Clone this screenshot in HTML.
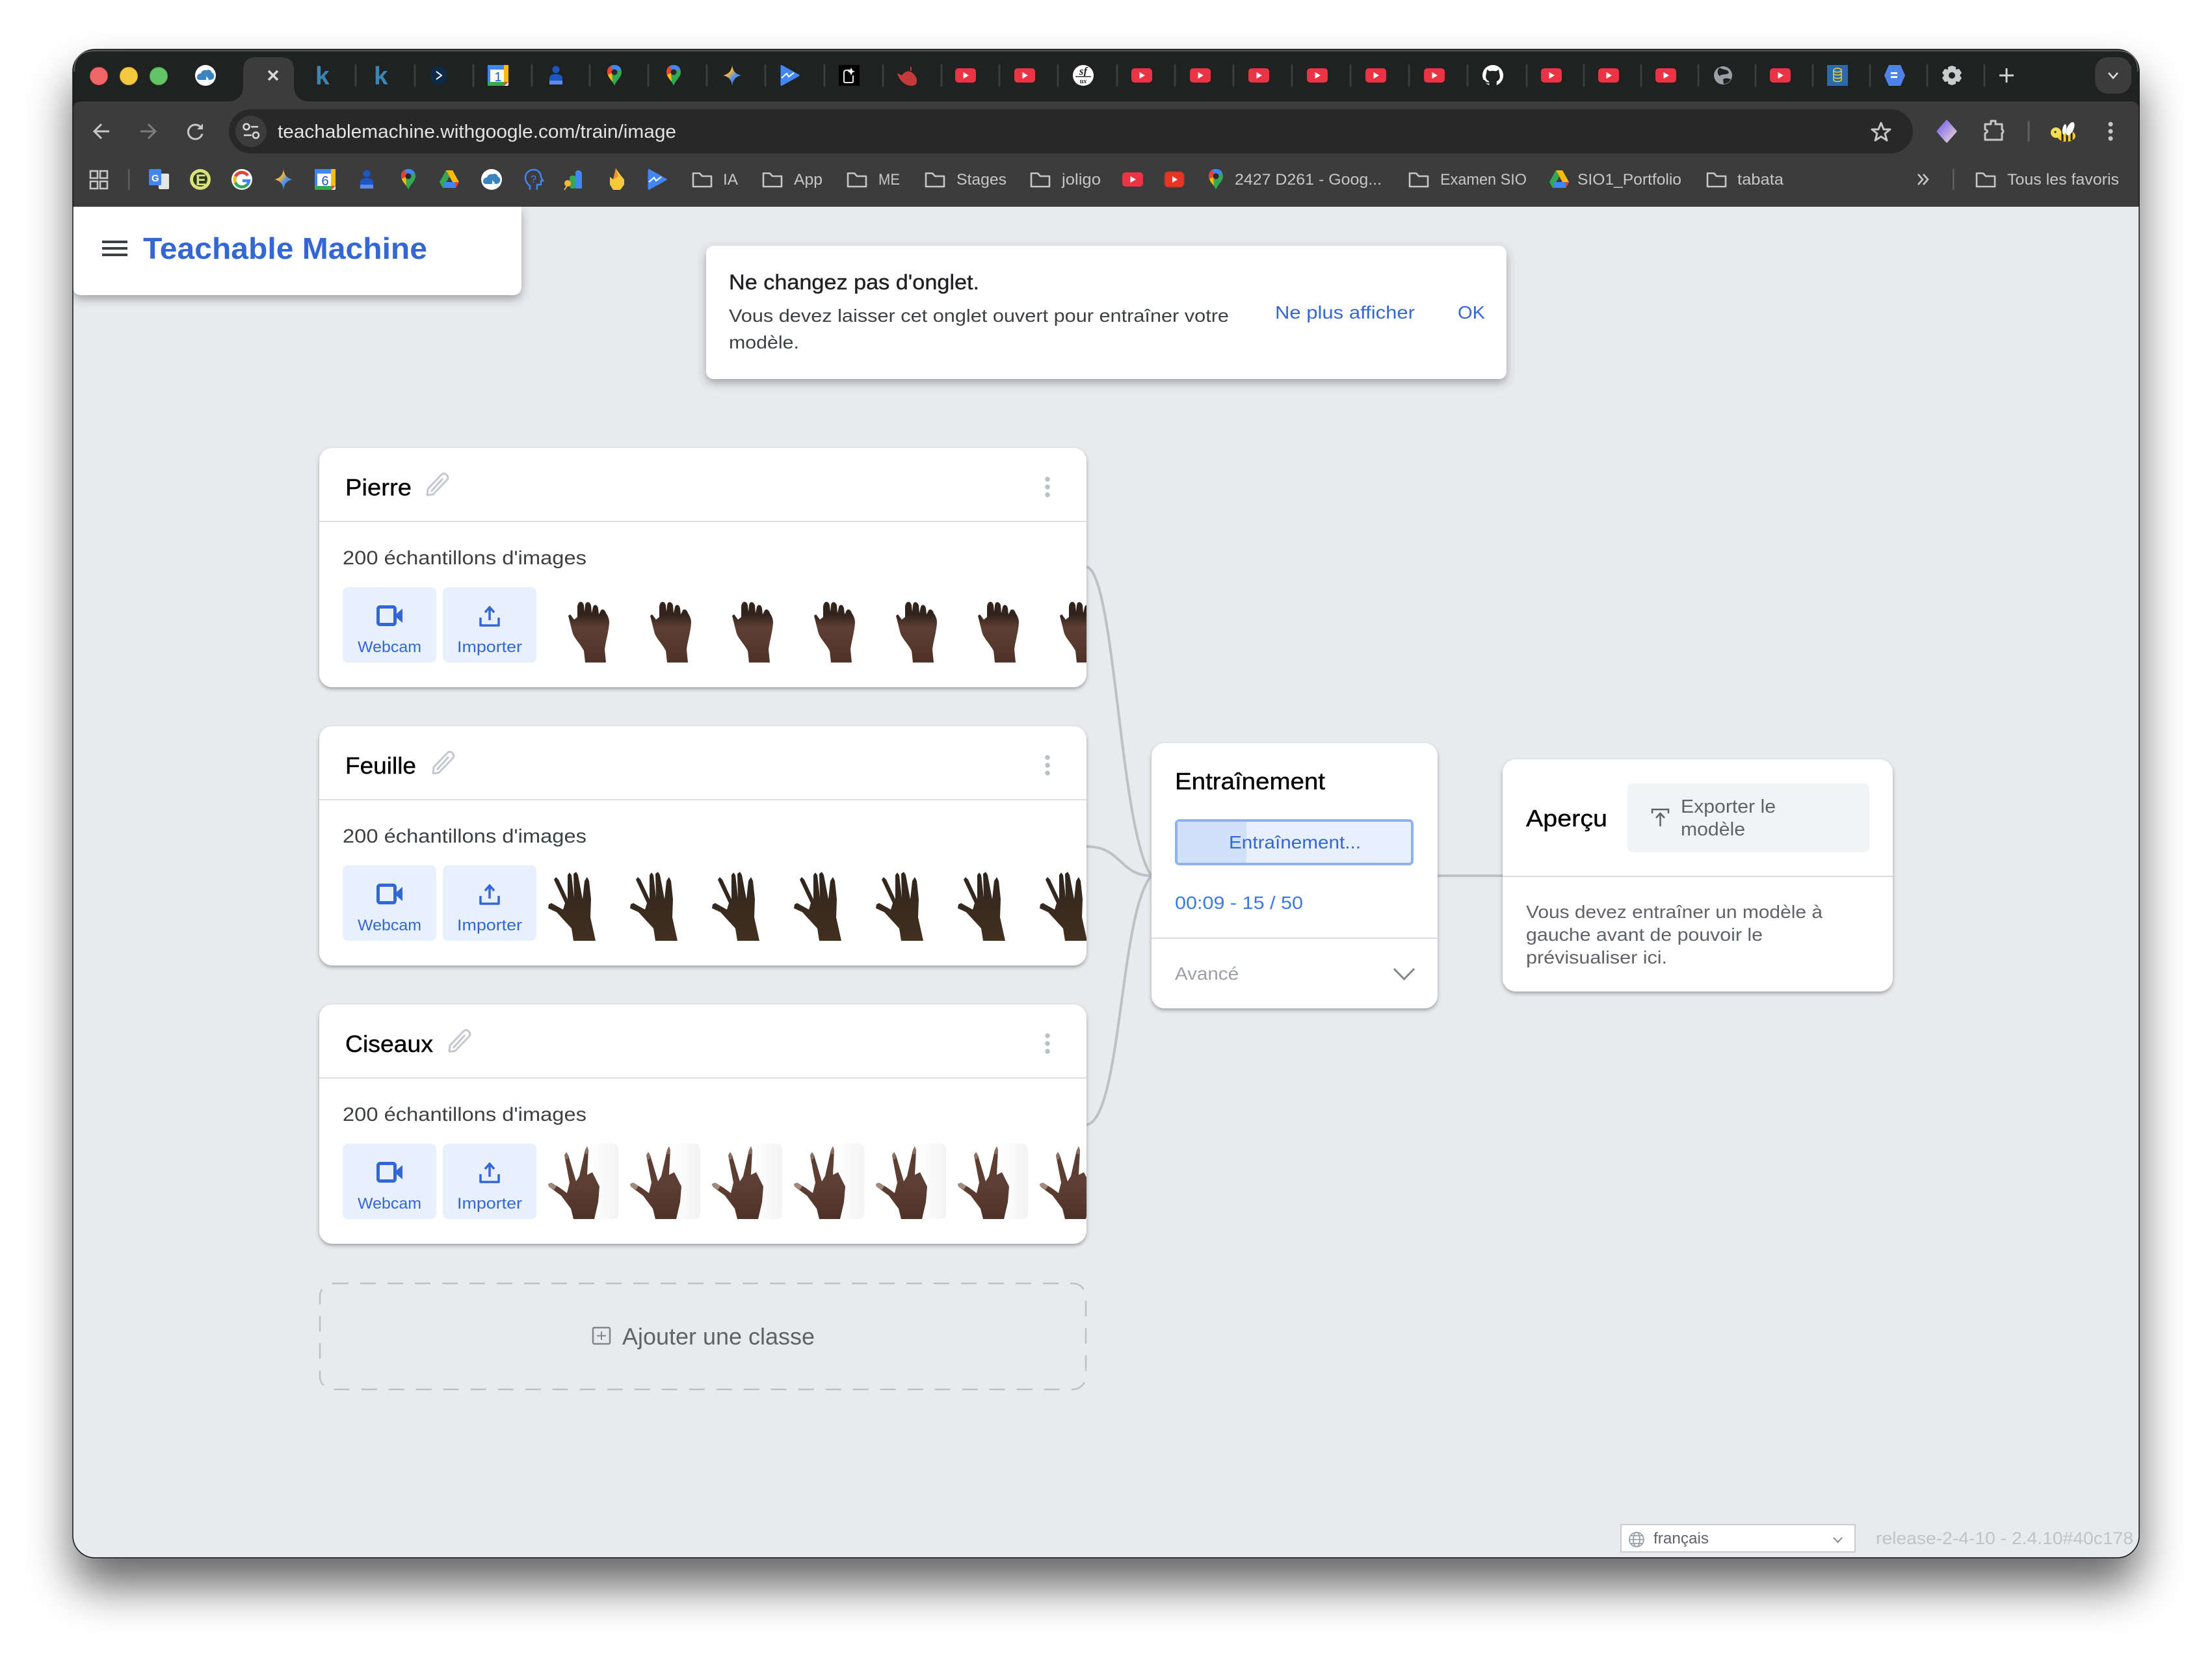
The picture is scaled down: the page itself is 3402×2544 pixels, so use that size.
<!DOCTYPE html>
<html lang="fr"><head><meta charset="utf-8"><title>Teachable Machine</title>
<style>
html,body{margin:0;padding:0;background:#fff}
svg{display:block}
text{font-family:"Liberation Sans",sans-serif;white-space:pre}
</style></head>
<body>
<svg xmlns="http://www.w3.org/2000/svg" width="3402" height="2544" viewBox="0 0 3402 2544">
<defs>
<filter id="winsh" x="-10%" y="-10%" width="120%" height="120%"><feGaussianBlur stdDeviation="35"/></filter>
<filter id="cs" x="-5%" y="-10%" width="110%" height="125%"><feDropShadow dx="0" dy="3" stdDeviation="3" flood-color="#3c4043" flood-opacity=".42"/></filter>
<filter id="cb" x="-8%" y="-15%" width="116%" height="140%"><feDropShadow dx="0" dy="6" stdDeviation="7" flood-color="#3c4043" flood-opacity=".42"/></filter>
<clipPath id="win"><rect x="112" y="76" width="3178" height="2320" rx="34"/></clipPath>
<clipPath id="cardclip"><rect x="491" y="680" width="1180" height="1300"/></clipPath>
<linearGradient id="gem" x1="0" y1="0" x2="1" y2="1"><stop offset="0" stop-color="#e8574a"/><stop offset=".35" stop-color="#f6b83c"/><stop offset=".6" stop-color="#4d8cf5"/><stop offset="1" stop-color="#35a853"/></linearGradient>
<linearGradient id="skin" x1="0" y1="0" x2="0" y2="1"><stop offset="0" stop-color="#33231d"/><stop offset=".22" stop-color="#33231d"/><stop offset=".42" stop-color="#5e3f33"/><stop offset="1" stop-color="#4f3227"/></linearGradient>
<linearGradient id="skin3" x1="0" y1="0" x2="0" y2="1"><stop offset="0" stop-color="#5a3c32"/><stop offset=".5" stop-color="#5e3f33"/><stop offset="1" stop-color="#4f3227"/></linearGradient>
<linearGradient id="dark" x1="0" y1="0" x2="0" y2="1"><stop offset="0" stop-color="#2f241d"/><stop offset="1" stop-color="#42301f"/></linearGradient>
<linearGradient id="tile3" x1="0" y1="0" x2="1" y2="0"><stop offset=".6" stop-color="#fff"/><stop offset="1" stop-color="#f3f3f3"/></linearGradient>
<linearGradient id="gemx" x1="0" y1="0" x2="1" y2="1"><stop offset="0" stop-color="#6f5cf5"/><stop offset="1" stop-color="#f0d8d0"/></linearGradient>

<symbol id="yt" viewBox="0 0 32 32"><rect x="0" y="5" width="32" height="22" rx="5" fill="#ea3344"/><path d="M12.500 11 L21 16 L12.500 21Z" fill="#fff"/></symbol>
<symbol id="maps" viewBox="0 0 32 32"><path d="M16 0C8 0 5 6 5 11C5 19 13 23 16 32C19 23 27 19 27 11C27 6 24 0 16 0Z" fill="#34a853"/><path d="M6 7C8 2 12 0 16 0C21 0 24 2 26 6L16 11Z" fill="#4285f4"/><path d="M5 11C5 6 7 3 10 2L16 11L8 19C6 16 5 14 5 11Z" fill="#ea4335"/><path d="M6 15L12 12L13 26C10 22 7 19 6 15Z" fill="#fbbc04"/><circle cx="16" cy="11" r="4.500" fill="#2a2a2a"/></symbol>
<symbol id="gemini" viewBox="0 0 32 32"><path d="M16 0C17 9 21 14 30 16C21 18 17 23 16 32C15 23 11 18 2 16C11 14 15 9 16 0Z" fill="url(#gem)"/></symbol>
<symbol id="person" viewBox="0 0 32 32"><circle cx="16" cy="7" r="5.500" fill="#1a56c4"/><path d="M6 30V21C6 16 10 14 16 14C22 14 26 16 26 21V30Z" fill="#1a56c4"/><path d="M6 30V24H26V30Z" fill="#5b8cec"/></symbol>
<symbol id="cal" viewBox="0 0 32 32"><rect width="32" height="32" rx="2" fill="#fff"/><rect width="32" height="7" fill="#4285f4"/><rect width="4" height="32" fill="#4285f4"/><rect x="25" width="7" height="26" fill="#fbbc04"/><rect y="26" width="26" height="6" fill="#34a853"/><path d="M26 26H32L26 32Z" fill="#ea4335"/></symbol>
<symbol id="cloud" viewBox="0 0 32 32"><circle cx="16" cy="16" r="16" fill="#fff"/><path d="M3 19C3 15 6 13 9 13C10 9 14 7 18 8C21 6 25 8 26 12C29 13 30 16 29 19C28 22 25 23 22 23H8C5 23 3 22 3 19Z" fill="#3c83bd"/><path d="M17 17L17 25L20 22L23 24Z" fill="#fff"/></symbol>
<symbol id="folder" viewBox="0 0 32 32"><path d="M2 6.500H12L16 11H30V27H2Z" fill="none" stroke="#c4c7c5" stroke-width="2.600" stroke-linejoin="round"/></symbol>
<symbol id="drive" viewBox="0 0 32 32"><path d="M11 2H21L31 20H21Z" fill="#fbbc04"/><path d="M11 2L1 20L6 29L16 12Z" fill="#34a853"/><path d="M9 20H31L26 29H6Z" fill="#4285f4"/><path d="M26 29L31 20H25Z" fill="#ea4335"/></symbol>
<symbol id="blueplay" viewBox="0 0 32 32"><path d="M3 1.500L29 16L3 30.500Z" fill="#4285f4" stroke="#4285f4" stroke-width="3" stroke-linejoin="round"/><path d="M3 20L11 13L14 18L22 12" fill="none" stroke="#fff" stroke-width="2"/></symbol>
<symbol id="webcam" viewBox="0 0 40 32"><rect x="2.500" y="2.500" width="26" height="27" rx="3" fill="none" stroke="#3367d6" stroke-width="5"/><path d="M31 13L40 5V27L31 19Z" fill="#3367d6"/></symbol>
<symbol id="upload" viewBox="0 0 32 32"><path d="M16 22V4M9 10L16 2L23 10" fill="none" stroke="#3367d6" stroke-width="3.500"/><path d="M2 18V30H30V18" fill="none" stroke="#3367d6" stroke-width="3.500" stroke-linejoin="round"/></symbol>
<symbol id="pencil" viewBox="0 0 36 36"><path d="M2 34.500L3 25L24 3Q27 0 31 2.500L33 5Q35 8 32.500 11L11 33.500Z M8 29L26 9" fill="none" stroke="#c4c7cc" stroke-width="3" stroke-linejoin="round"/></symbol>

<symbol id="rock" viewBox="0 0 115 116"><path d="M64 116L62 98C55 85 46 78 44 68L38 44L41 42L47 50L52 46L52 30C53 21 60 20 62 28L63 38L64 28C65 21 71 22 73 28L74 40L76 31C77 26 83 26 84 33L85 42L88 36C91 32 95 36 96 40C100 46 101 50 101 55C100 70 95 85 94 96L96 116Z" fill="url(#skin)"/></symbol>
<symbol id="paper" viewBox="0 0 115 116"><path d="M46 116L43 97L20 72L7 66L8 60L12 58L30 68L33 58L16 22L19 18L23 22L37 52L37 15L40 11L43 15L47 50L46 13L50 10L53 15L60 52L63 24L67 18L70 24L73 52L72 80L80 116Z" fill="url(#dark)"/></symbol>
<symbol id="sciss" viewBox="0 0 115 116"><rect width="115" height="116" rx="8" fill="url(#tile3)"/><path d="M46 116L42 100L27 80L8 66L7 62L12 60L25 68L36 76L40 60L32 18L35 13L38 18L50 58L55 50L64 10L67 4L69 10L67 48L75 44L80 54L86 66L84 90L78 116Z" fill="url(#skin3)"/><path d="M7 62L12 60L20 65L16 71L8 66Z" fill="#a08a7e"/><path d="M32 18L35 13L38 18L37 24L33 24ZM64 10L67 4L69 10L68 16L64 16Z" fill="#8a6f63"/></symbol>
<g id="tiles1">
<use href="#rock" x="836" y="903" width="115" height="116"/><use href="#rock" x="962" y="903" width="115" height="116"/><use href="#rock" x="1088" y="903" width="115" height="116"/><use href="#rock" x="1214" y="903" width="115" height="116"/><use href="#rock" x="1340" y="903" width="115" height="116"/><use href="#rock" x="1466" y="903" width="115" height="116"/><use href="#rock" x="1592" y="903" width="115" height="116"/>
</g>
<g id="btns">
<rect x="527" y="903" width="144" height="116" rx="8" fill="#e8effd"/><rect x="681" y="903" width="144" height="116" rx="8" fill="#e8effd"/>
<use href="#webcam" x="579" y="931" width="40" height="32"/><use href="#upload" x="737" y="932" width="32" height="32"/>
</g>
<g id="cardbase">
<rect x="491" y="689" width="1180" height="368" rx="20" fill="#fff" filter="url(#cs)"/>
<rect x="491" y="801" width="1180" height="2" fill="#dedfe1"/>
<circle cx="1611" cy="737" r="3.800" fill="#bdc1c6"/><circle cx="1611" cy="749" r="3.800" fill="#bdc1c6"/><circle cx="1611" cy="761" r="3.800" fill="#bdc1c6"/>
</g>
</defs>

<rect width="3402" height="2544" fill="#fff"/>
<rect x="112" y="120" width="3178" height="2320" rx="34" fill="#000" opacity=".6" filter="url(#winsh)"/>

<g clip-path="url(#win)">
<rect x="112" y="76" width="3178" height="2320" fill="#e8eaed"/>
<rect x="112" y="76" width="3178" height="242" fill="#202221"/>
<path d="M112 170Q112 156 126 156H3276Q3290 156 3290 170V318H112Z" fill="#3c3c3c"/>
<path d="M350 156C366 156 374 146 374 132V108Q374 88 394 88H432Q452 88 452 108V132C452 146 460 156 476 156Z" fill="#3c3c3c"/>

<!-- traffic lights -->
<circle cx="152" cy="117" r="13.500" fill="#f0676a" stroke="#d8494c" stroke-width="1"/>
<circle cx="198" cy="117" r="13.500" fill="#f5c83f" stroke="#d9a92c" stroke-width="1"/>
<circle cx="244" cy="117" r="13.500" fill="#62c466" stroke="#47a94d" stroke-width="1"/>
<use href="#cloud" x="300" y="100" width="32" height="32"/>
<path d="M413 109L427 123M427 109L413 123" stroke="#d8d8d8" stroke-width="3.500" fill="none"/>

<!-- tab separators -->
<path d="M547 100v32M638 100v32M728 100v32M818 100v32M907 100v32M997 100v32M1087 100v32M1177 100v32M1268 100v32M1358 100v32M1448 100v32M1537 100v32M1627 100v32M1718 100v32M1807 100v32M1897 100v32M1987 100v32M2077 100v32M2167 100v32M2257 100v32M2348 100v32M2436 100v32M2524 100v32M2612 100v32M2700 100v32M2788 100v32M2876 100v32M2964 100v32M3052 100v32" stroke="#3c3f3e" stroke-width="3" stroke-linecap="round"/>

<!-- tab icons -->
<text x="485" y="130" font-size="39" font-weight="bold" fill="#3a86b4">k</text>
<text x="575" y="130" font-size="39" font-weight="bold" fill="#3a86b4">k</text>
<path d="M675 100L687 107V125L675 132L663 125V107Z" fill="#0e2a47"/><path d="M671 110L679 116L671 122" fill="none" stroke="#fff" stroke-width="2"/>
<use href="#cal" x="750" y="100" width="32" height="32"/><text x="766" y="125" font-size="20" fill="#1a56c4" text-anchor="middle">1</text>
<use href="#person" x="839" y="100" width="32" height="32"/>
<use href="#maps" x="929" y="100" width="32" height="32"/>
<use href="#maps" x="1020" y="100" width="32" height="32"/>
<use href="#gemini" x="1110" y="100" width="32" height="32"/>
<use href="#blueplay" x="1199" y="100" width="32" height="32"/>
<rect x="1290" y="100" width="32" height="32" fill="#000"/><path d="M1307 108H1302Q1298 108 1298 112V125Q1298 127 1300 127H1310Q1312 127 1312 125V116" fill="none" stroke="#e8e8e8" stroke-width="2"/><path d="M1309 104L1311 108.500L1315 110L1311 111.500L1309 116L1307 111.500L1303 110L1307 108.500Z" fill="#fff"/>
<path d="M1380 113C1383 112 1384 117 1388 115C1392 109 1399 108 1403 112C1411 118 1412 127 1407 131C1397 135 1384 127 1380 113Z" fill="#c43a3a"/><path d="M1401 103V109" stroke="#c43a3a" stroke-width="2"/>
<use href="#yt" x="1469" y="100" width="32" height="32"/><use href="#yt" x="1560" y="100" width="32" height="32"/>
<circle cx="1666" cy="116" r="16" fill="#fff"/><text x="1666" y="115" font-size="17" font-style="italic" font-weight="bold" fill="#222" text-anchor="middle" style="font-family:'Liberation Serif',serif">sf</text><rect x="1654" y="117" width="24" height="1.500" fill="#333"/><text x="1666" y="128" font-size="10" font-style="italic" font-weight="bold" fill="#222" text-anchor="middle" style="font-family:'Liberation Serif',serif">ux</text>
<use href="#yt" x="1740" y="100" width="32" height="32"/><use href="#yt" x="1830" y="100" width="32" height="32"/><use href="#yt" x="1920" y="100" width="32" height="32"/><use href="#yt" x="2010" y="100" width="32" height="32"/><use href="#yt" x="2100" y="100" width="32" height="32"/><use href="#yt" x="2190" y="100" width="32" height="32"/>
<circle cx="2296" cy="116" r="16" fill="#fff"/><path d="M2287 107L2291 109.500Q2296 108.500 2301 109.500L2305 107L2306 113Q2309 122 2302 125L2301.500 132H2290.500L2290 125Q2283 122 2286 113Z" fill="#202221"/><path d="M2290 127.500Q2285 128 2282 123" stroke="#202221" stroke-width="2" fill="none"/>
<use href="#yt" x="2370" y="100" width="32" height="32"/><use href="#yt" x="2458" y="100" width="32" height="32"/><use href="#yt" x="2546" y="100" width="32" height="32"/>
<circle cx="2650" cy="116" r="14" fill="#9aa0a6"/><path d="M2645 104C2650 108 2658 106 2659 112C2655 116 2648 113 2645 117C2641 114 2640 108 2645 104ZM2650 122C2654 119 2660 121 2662 122C2659 127 2655 129 2651 129Z" fill="#202221"/>
<use href="#yt" x="2722" y="100" width="32" height="32"/>
<rect x="2810" y="100" width="32" height="32" fill="#2c6aa8"/><ellipse cx="2826" cy="108" rx="6" ry="3" fill="none" stroke="#e7c93a" stroke-width="1.600"/><path d="M2820 108V124M2832 108V124M2820 114Q2826 117 2832 114M2820 119Q2826 122 2832 119M2820 124Q2826 127 2832 124" stroke="#e7c93a" stroke-width="1.600" fill="none"/>
<path d="M2905 100H2923L2930 116L2923 132H2905L2898 116Z" fill="#4f83ec"/><rect x="2908" y="111" width="10" height="3" fill="#fff"/><rect x="2908" y="117" width="10" height="3" fill="#fff"/>
<path d="M3002 101L3008 103V107L3013 106L3017 112L3014 116L3017 120L3013 126L3008 125V129L3002 131L2996 129V125L2991 126L2987 120L2990 116L2987 112L2991 106L2996 107V103Z" fill="#c9cbcd"/><circle cx="3002" cy="116" r="5" fill="#202221"/>
<path d="M3086 105V127M3075 116H3097" stroke="#cfd1d2" stroke-width="3"/>
<rect x="3222" y="88" width="56" height="56" rx="20" fill="#3c3c3c"/>
<path d="M3243 112L3250 120L3257 112" fill="none" stroke="#d8d8d8" stroke-width="2.600"/>

<!-- toolbar -->
<path d="M168 202H146M156 191L145 202L156 213" fill="none" stroke="#c7c7c7" stroke-width="3"/>
<path d="M216 202H238M228 191L239 202L228 213" fill="none" stroke="#7d7d7d" stroke-width="3"/>
<path d="M309 196A11 11 0 1 0 311 206" fill="none" stroke="#c7c7c7" stroke-width="3"/><path d="M312 190V199H303Z" fill="#c7c7c7"/>
<rect x="352" y="168" width="2590" height="68" rx="34" fill="#282828"/>
<circle cx="386" cy="202" r="24" fill="#3c3c3c"/>
<circle cx="379" cy="195" r="4.500" fill="none" stroke="#d8d8d8" stroke-width="2.600"/><path d="M386 195H397M375 208H387" stroke="#d8d8d8" stroke-width="2.600"/><circle cx="393.500" cy="208" r="4.500" fill="none" stroke="#d8d8d8" stroke-width="2.600"/>
<text x="427" y="212" font-size="29" fill="#e3e3e3" textLength="613" lengthAdjust="spacingAndGlyphs">teachablemachine.withgoogle.com/train/image</text>
<path d="M2893 189L2897 199H2907L2899 205.500L2902 216L2893 210L2884 216L2887 205.500L2879 199H2889Z" fill="none" stroke="#c7c7c7" stroke-width="3" stroke-linejoin="round"/>
<path d="M2994 186L3008 202L2994 218L2980 202Z" fill="url(#gemx)" stroke="url(#gemx)" stroke-width="3" stroke-linejoin="round"/>
<path d="M3053 191H3062V186H3069V191H3079V199Q3083 202 3079 205V215H3053V205Q3060 202 3053 199Z" fill="none" stroke="#c7c7c7" stroke-width="3" stroke-linejoin="round"/>
<rect x="3118.500" y="186" width="3" height="32" rx="1.500" fill="#5f5f5f"/>
<ellipse cx="3178" cy="209" rx="14" ry="9" fill="#f3cd2d"/><path d="M3172 201V217M3179 200V218M3186 202V216" stroke="#222" stroke-width="3"/>
<circle cx="3162" cy="204" r="8" fill="#f7dd55"/><circle cx="3161" cy="203" r="1.500" fill="#111"/>
<ellipse cx="3184" cy="198" rx="5" ry="11" fill="#fff" transform="rotate(25 3184 198)"/><ellipse cx="3175" cy="199" rx="3" ry="8" fill="#fff" transform="rotate(10 3175 199)"/>
<circle cx="3246" cy="191" r="3.500" fill="#c7c7c7"/><circle cx="3246" cy="202" r="3.500" fill="#c7c7c7"/><circle cx="3246" cy="213" r="3.500" fill="#c7c7c7"/>

<!-- bookmarks -->
<g fill="none" stroke="#c7c7c7" stroke-width="2.600"><rect x="139" y="263" width="11" height="11"/><rect x="154" y="263" width="11" height="11"/><rect x="139" y="279" width="11" height="11"/><rect x="154" y="279" width="11" height="11"/></g>
<rect x="197" y="260" width="2.500" height="32" fill="#5f5f5f"/>
<rect x="244" y="267" width="16" height="24" rx="2" fill="#e4e4e4"/><rect x="229" y="260" width="19" height="25" rx="2" fill="#4285f4"/><text x="233" y="279" font-size="15" fill="#fff" font-weight="bold">G</text>
<circle cx="308" cy="276" r="16" fill="#dbe27d"/><circle cx="308" cy="276" r="11" fill="#2c3a1c"/><text x="301" y="285" font-size="24" font-weight="bold" fill="#dbe27d">E</text>
<circle cx="372" cy="276" r="16" fill="#fff"/><path d="M381 270A11 11 0 1 0 383 278H373" fill="none" stroke="#4285f4" stroke-width="4.500"/><path d="M381 270A11 11 0 0 0 362 271" fill="none" stroke="#ea4335" stroke-width="4.500"/><path d="M362 271A11 11 0 0 0 362 281" fill="none" stroke="#fbbc04" stroke-width="4.500"/><path d="M362 281A11 11 0 0 0 380 284" fill="none" stroke="#34a853" stroke-width="4.500"/>
<use href="#gemini" x="420" y="260" width="32" height="32"/>
<use href="#cal" x="484" y="260" width="32" height="32"/><text x="500" y="285" font-size="20" fill="#1a56c4" text-anchor="middle">6</text>
<use href="#person" x="548" y="260" width="32" height="32"/>
<use href="#maps" x="612" y="260" width="32" height="32"/>
<use href="#drive" x="675" y="260" width="32" height="32"/>
<use href="#cloud" x="740" y="260" width="32" height="32"/>
<path d="M815 292V286C810 282 808 278 808 273C808 266 814 261 821 261C828 261 832 267 832 272L835 278H832V284H826V292" fill="none" stroke="#4285f4" stroke-width="2.500"/><text x="816" y="281" font-size="16" fill="#4285f4">?</text>
<path d="M889 262Q895 262 895 268V290H885V266Q885 262 889 262Z" fill="#4285f4"/><rect x="876" y="270" width="10" height="20" rx="4" fill="#34a853"/><circle cx="873" cy="282" r="5" fill="#f6b83c"/><path d="M872 286L868 292" stroke="#f6b83c" stroke-width="2"/>
<path d="M947 259L955 270L960 276V284L954 292H943L938 284V272L943 276Z" fill="#f7c83c"/><path d="M947 259L951 271L943 276Z" fill="#e8912d"/>
<use href="#blueplay" x="995" y="260" width="32" height="32"/>

<g font-size="24" fill="#c7c7c7">
<use href="#folder" x="1064" y="260" width="32" height="32"/><text x="1112" y="284" textLength="23" lengthAdjust="spacingAndGlyphs">IA</text>
<use href="#folder" x="1172" y="260" width="32" height="32"/><text x="1221" y="284" textLength="44" lengthAdjust="spacingAndGlyphs">App</text>
<use href="#folder" x="1302" y="260" width="32" height="32"/><text x="1351" y="284" textLength="33" lengthAdjust="spacingAndGlyphs">ME</text>
<use href="#folder" x="1422" y="260" width="32" height="32"/><text x="1471" y="284" textLength="77" lengthAdjust="spacingAndGlyphs">Stages</text>
<use href="#folder" x="1584" y="260" width="32" height="32"/><text x="1633" y="284" textLength="60" lengthAdjust="spacingAndGlyphs">joligo</text>
<use href="#yt" x="1726" y="260" width="32" height="32"/>
<rect x="1791" y="264" width="30" height="24" rx="6" fill="#ea3323" stroke="#8f3a30" stroke-width="1.500"/><path d="M1803 271L1811 276L1803 281Z" fill="#fff"/>
<use href="#maps" x="1854" y="260" width="32" height="32"/><text x="1899" y="284" textLength="226" lengthAdjust="spacingAndGlyphs">2427 D261 - Goog...</text>
<use href="#folder" x="2166" y="260" width="32" height="32"/><text x="2215" y="284" textLength="133" lengthAdjust="spacingAndGlyphs">Examen SIO</text>
<use href="#drive" x="2382" y="260" width="32" height="32"/><text x="2426" y="284" textLength="160" lengthAdjust="spacingAndGlyphs">SIO1_Portfolio</text>
<use href="#folder" x="2624" y="260" width="32" height="32"/><text x="2672" y="284" textLength="71" lengthAdjust="spacingAndGlyphs">tabata</text>
<path d="M2950 268L2957 276L2950 284M2958 268L2965 276L2958 284" fill="none" stroke="#c7c7c7" stroke-width="2.600"/>
<rect x="3003" y="260" width="2.500" height="32" fill="#5f5f5f"/>
<use href="#folder" x="3038" y="260" width="32" height="32"/><text x="3087" y="284" textLength="172" lengthAdjust="spacingAndGlyphs">Tous les favoris</text>
</g>

<!-- connectors -->
<g fill="none" stroke="#bdc1c6" stroke-width="4">
<path d="M1671 872C1715 880 1722 1280 1771 1347"/>
<path d="M1671 1302C1725 1302 1722 1347 1771 1347"/>
<path d="M1671 1730C1725 1722 1722 1400 1771 1347"/>
<path d="M2211 1347H2311"/>
</g>

<!-- header card -->
<path d="M112 318H802V440Q802 454 788 454H126Q112 454 112 440Z" fill="#fff" filter="url(#cb)"/>
<rect x="157" y="370" width="39" height="4" fill="#3c4043"/><rect x="157" y="380" width="39" height="4" fill="#3c4043"/><rect x="157" y="390" width="39" height="4" fill="#3c4043"/>
<text x="220" y="398" font-size="46" font-weight="bold" fill="#3367d6" textLength="437" lengthAdjust="spacingAndGlyphs">Teachable Machine</text>

<!-- notification -->
<rect x="1086" y="378" width="1231" height="205" rx="12" fill="#fff" filter="url(#cb)"/>
<text x="1121" y="445" font-size="32" fill="#202124" stroke="#202124" stroke-width=".4" textLength="385" lengthAdjust="spacingAndGlyphs">Ne changez pas d'onglet.</text>
<text x="1121" y="495" font-size="28" fill="#3c4043" textLength="769" lengthAdjust="spacingAndGlyphs">Vous devez laisser cet onglet ouvert pour entraîner votre</text>
<text x="1121" y="536" font-size="28" fill="#3c4043" textLength="108" lengthAdjust="spacingAndGlyphs">modèle.</text>
<text x="1961" y="490" font-size="28" fill="#3367d6" textLength="215" lengthAdjust="spacingAndGlyphs">Ne plus afficher</text>
<text x="2242" y="490" font-size="28" fill="#3367d6" textLength="42" lengthAdjust="spacingAndGlyphs">OK</text>

<!-- card 1 -->
<use href="#cardbase"/>
<text x="531" y="762" font-size="36" fill="#000" stroke="#000" stroke-width=".4" textLength="102" lengthAdjust="spacingAndGlyphs">Pierre</text>
<use href="#pencil" x="655" y="727" width="36" height="36"/>
<text x="527" y="868" font-size="30" fill="#3c4043" textLength="375" lengthAdjust="spacingAndGlyphs">200 échantillons d'images</text>
<use href="#btns"/>
<text x="550" y="1003" font-size="24" fill="#3367d6" textLength="98" lengthAdjust="spacingAndGlyphs">Webcam</text>
<text x="703" y="1003" font-size="24" fill="#3367d6" textLength="100" lengthAdjust="spacingAndGlyphs">Importer</text>
<g clip-path="url(#cardclip)"><use href="#tiles1"/></g>

<!-- card 2 -->
<use href="#cardbase" y="428"/>
<text x="531" y="1190" font-size="36" fill="#000" stroke="#000" stroke-width=".4" textLength="109" lengthAdjust="spacingAndGlyphs">Feuille</text>
<use href="#pencil" x="664" y="1155" width="36" height="36"/>
<text x="527" y="1296" font-size="30" fill="#3c4043" textLength="375" lengthAdjust="spacingAndGlyphs">200 échantillons d'images</text>
<use href="#btns" y="428"/>
<text x="550" y="1431" font-size="24" fill="#3367d6" textLength="98" lengthAdjust="spacingAndGlyphs">Webcam</text>
<text x="703" y="1431" font-size="24" fill="#3367d6" textLength="100" lengthAdjust="spacingAndGlyphs">Importer</text>
<g clip-path="url(#cardclip)">
<use href="#paper" x="836" y="1331" width="115" height="116"/><use href="#paper" x="962" y="1331" width="115" height="116"/><use href="#paper" x="1088" y="1331" width="115" height="116"/><use href="#paper" x="1214" y="1331" width="115" height="116"/><use href="#paper" x="1340" y="1331" width="115" height="116"/><use href="#paper" x="1466" y="1331" width="115" height="116"/><use href="#paper" x="1592" y="1331" width="115" height="116"/>
</g>

<!-- card 3 -->
<use href="#cardbase" y="856"/>
<text x="531" y="1618" font-size="36" fill="#000" stroke="#000" stroke-width=".4" textLength="135" lengthAdjust="spacingAndGlyphs">Ciseaux</text>
<use href="#pencil" x="689" y="1583" width="36" height="36"/>
<text x="527" y="1724" font-size="30" fill="#3c4043" textLength="375" lengthAdjust="spacingAndGlyphs">200 échantillons d'images</text>
<use href="#btns" y="856"/>
<text x="550" y="1859" font-size="24" fill="#3367d6" textLength="98" lengthAdjust="spacingAndGlyphs">Webcam</text>
<text x="703" y="1859" font-size="24" fill="#3367d6" textLength="100" lengthAdjust="spacingAndGlyphs">Importer</text>
<g clip-path="url(#cardclip)">
<use href="#sciss" x="836" y="1759" width="115" height="116"/><use href="#sciss" x="962" y="1759" width="115" height="116"/><use href="#sciss" x="1088" y="1759" width="115" height="116"/><use href="#sciss" x="1214" y="1759" width="115" height="116"/><use href="#sciss" x="1340" y="1759" width="115" height="116"/><use href="#sciss" x="1466" y="1759" width="115" height="116"/><use href="#sciss" x="1592" y="1759" width="115" height="116"/>
</g>

<!-- add class -->
<rect x="492" y="1974" width="1178" height="163" rx="20" fill="none" stroke="#bdc1c6" stroke-width="2.500" stroke-dasharray="24 18"/>
<rect x="912" y="2042" width="26" height="25" rx="2" fill="none" stroke="#80868b" stroke-width="2.500"/><path d="M925 2048V2061M918 2054.500H932" stroke="#80868b" stroke-width="2"/>
<text x="957" y="2068" font-size="36" fill="#5f6368" textLength="296" lengthAdjust="spacingAndGlyphs">Ajouter une classe</text>

<!-- training card -->
<rect x="1771" y="1143" width="440" height="408" rx="20" fill="#fff" filter="url(#cs)"/>
<text x="1807" y="1214" font-size="36" fill="#000" stroke="#000" stroke-width=".4" textLength="231" lengthAdjust="spacingAndGlyphs">Entraînement</text>
<rect x="1809" y="1262" width="363" height="67" rx="5" fill="#e8effd" stroke="#8fb1f0" stroke-width="4"/>
<rect x="1811" y="1264" width="106" height="63" fill="#d2e1fa"/>
<text x="1890" y="1305" font-size="28" fill="#3367d6" textLength="203" lengthAdjust="spacingAndGlyphs">Entraînement...</text>
<text x="1807" y="1398" font-size="28" fill="#3b78e7" textLength="197" lengthAdjust="spacingAndGlyphs">00:09 - 15 / 50</text>
<rect x="1771" y="1442" width="440" height="2" fill="#dadce0"/>
<text x="1807" y="1507" font-size="28" fill="#9aa0a6" textLength="98" lengthAdjust="spacingAndGlyphs">Avancé</text>
<path d="M2144 1490L2159.500 1506L2175 1490" fill="none" stroke="#80868b" stroke-width="3"/>

<!-- preview card -->
<rect x="2311" y="1168" width="600" height="357" rx="20" fill="#fff" filter="url(#cs)"/>
<text x="2347" y="1271" font-size="36" fill="#000" stroke="#000" stroke-width=".4" textLength="125" lengthAdjust="spacingAndGlyphs">Aperçu</text>
<rect x="2503" y="1205" width="372" height="106" rx="8" fill="#f1f3f4"/>
<path d="M2541 1251V1245H2566V1251M2553.500 1271V1252M2547 1258L2553.500 1251L2560 1258" fill="none" stroke="#5f6368" stroke-width="2.500"/>
<text x="2585" y="1250" font-size="29" fill="#5f6368" textLength="146" lengthAdjust="spacingAndGlyphs">Exporter le</text>
<text x="2585" y="1285" font-size="29" fill="#5f6368" textLength="99" lengthAdjust="spacingAndGlyphs">modèle</text>
<rect x="2311" y="1347" width="600" height="2" fill="#dadce0"/>
<g font-size="28" fill="#5f6368">
<text x="2347" y="1412" textLength="456" lengthAdjust="spacingAndGlyphs">Vous devez entraîner un modèle à</text>
<text x="2347" y="1447" textLength="364" lengthAdjust="spacingAndGlyphs">gauche avant de pouvoir le</text>
<text x="2347" y="1482" textLength="217" lengthAdjust="spacingAndGlyphs">prévisualiser ici.</text>
</g>

<!-- footer -->
<rect x="2493" y="2345" width="360" height="42" fill="#fff" stroke="#cbcbcb" stroke-width="2"/>
<g fill="none" stroke="#9aa0a6" stroke-width="1.800"><circle cx="2517" cy="2368" r="11"/><ellipse cx="2517" cy="2368" rx="5" ry="11"/><path d="M2506 2368H2528M2508 2362H2526M2508 2374H2526"/></g>
<text x="2543" y="2374" font-size="24" fill="#5f6368" textLength="85" lengthAdjust="spacingAndGlyphs">français</text>
<path d="M2820 2365L2826.500 2372L2833 2365" fill="none" stroke="#80868b" stroke-width="2"/>
<text x="2885" y="2375" font-size="27" fill="#c0c3c7" textLength="396" lengthAdjust="spacingAndGlyphs">release-2-4-10 - 2.4.10#40c178</text>
</g>
<!-- window outline -->
<rect x="112" y="76" width="3178" height="2320" rx="34" fill="none" stroke="#111" stroke-width="1.500"/>
<path d="M114 110Q114 78 146 78H3256Q3288 78 3288 110" fill="none" stroke="#6a6a6a" stroke-width="1.500"/>
</svg>
</body></html>
